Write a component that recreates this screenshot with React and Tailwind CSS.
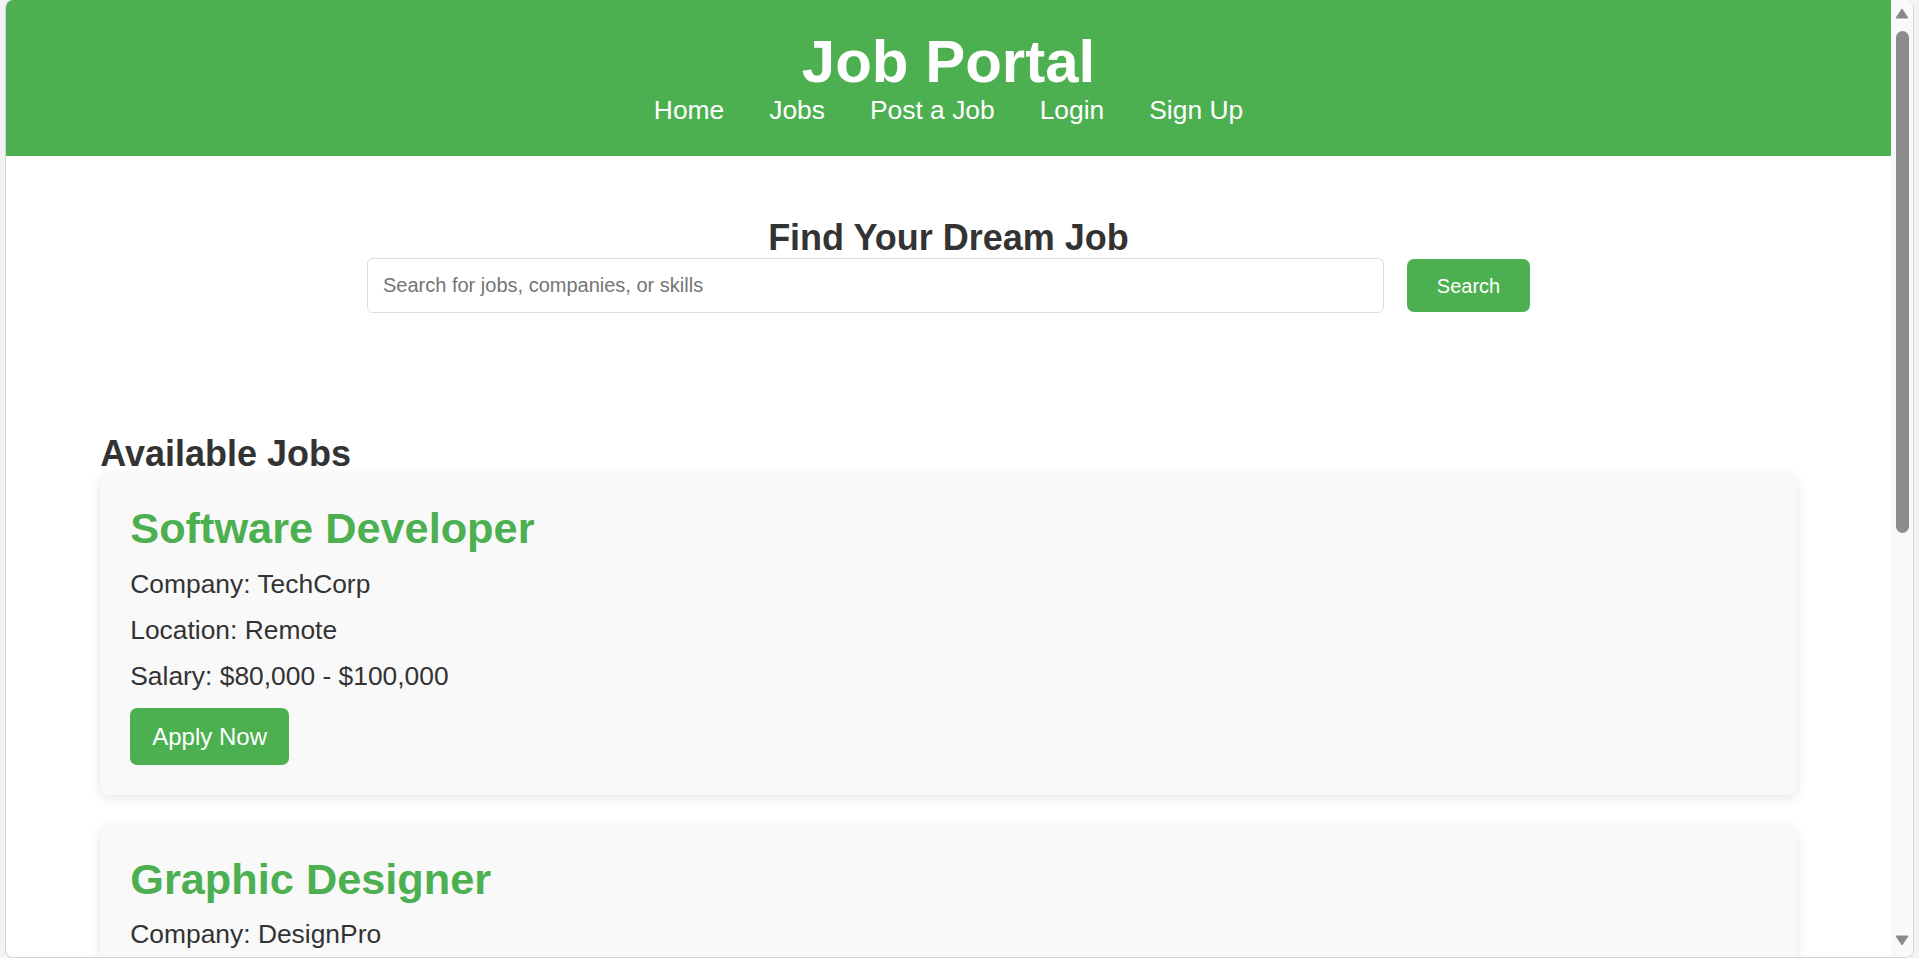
import React from "react";

const jobs = [
  { title: "Software Developer", company: "TechCorp", location: "Remote", salary: "$80,000 - $100,000" },
  { title: "Graphic Designer", company: "DesignPro", location: "New York, NY", salary: "$60,000 - $75,000" },
  { title: "Marketing Manager", company: "BrandWorks", location: "Chicago, IL", salary: "$70,000 - $90,000" },
];

const navLinks = ["Home", "Jobs", "Post a Job", "Login", "Sign Up"];

const Scrollbar = () => (
  <div className="flex flex-col items-center w-[22px] shrink-0 bg-[#f9f9f9]">
    <svg className="mt-[8px]" width="14" height="11" viewBox="0 0 14 11">
      <path d="M7 1 L13 10 L1 10 Z" fill="#8a8a8a" stroke="#8a8a8a" strokeLinejoin="round" />
    </svg>
    <div className="mt-[12px] ml-[1px] w-[13px] h-[502px] rounded-full bg-[#8c8c8c]" />
    <div className="flex-1" />
    <svg className="mb-[11px]" width="14" height="11" viewBox="0 0 14 11">
      <path d="M1 1 L13 1 L7 10 Z" fill="#8a8a8a" stroke="#8a8a8a" strokeLinejoin="round" />
    </svg>
  </div>
);

const JobCard = ({ job }) => (
  <div className="bg-[#f9f9f9] rounded-[8px] shadow-[0_3px_12px_rgba(0,0,0,0.1)] px-[30px] pt-[30px] pb-[30px] mb-[30px]">
    <h3 className="text-[43.3px] leading-[49.5px] font-bold text-[#4caf50]">{job.title}</h3>
    <p className="mt-[15px] text-[26.4px] leading-[31px] text-[#333]">Company: {job.company}</p>
    <p className="mt-[15px] text-[26.4px] leading-[31px] text-[#333]">Location: {job.location}</p>
    <p className="mt-[15px] text-[26.4px] leading-[31px] text-[#333]">Salary: {job.salary}</p>
    <button className="mt-[16px] bg-[#4caf50] text-white text-[24px] leading-[27px] px-[22px] py-[15px] rounded-[7px]">
      Apply Now
    </button>
  </div>
);

export default function App() {
  return (
    <div className="h-[958px] w-full bg-[#f3f3f3] px-[5px] font-['Liberation_Sans',Arial,sans-serif] overflow-hidden">
      <div className="flex h-full rounded-[8px] border border-t-0 border-[#d4d4d4] bg-white overflow-hidden">
        {/* Page */}
        <main className="flex-1 min-w-0 overflow-hidden">
          {/* Header */}
          <header className="bg-[#4caf50] text-white text-center pt-[27px] pb-[31px]">
            <h1 className="text-[60px] leading-[69px] font-bold">Job Portal</h1>
            <nav className="flex justify-center gap-[45px] text-[26.4px] leading-[29px]">
              {navLinks.map((l) => (
                <a key={l} href="#" className="text-white">
                  {l}
                </a>
              ))}
            </nav>
          </header>

          {/* Search */}
          <section className="pt-[61px] text-center">
            <h2 className="text-[36px] leading-[41px] font-bold text-[#333]">Find Your Dream Job</h2>
            <div className="flex justify-center items-center gap-[23px]">
              <input
                type="text"
                placeholder="Search for jobs, companies, or skills"
                className="w-[1017px] h-[55px] border border-[#dddddd] rounded-[6px] px-[15px] text-[20px] placeholder:text-[#757575] outline-none"
              />
              <button className="w-[123px] h-[53px] bg-[#4caf50] text-white text-[20px] rounded-[7px]">
                Search
              </button>
            </div>
          </section>

          {/* Jobs */}
          <section className="w-[90%] mx-auto mt-[120px]">
            <h2 className="text-[36px] leading-[41px] font-bold text-[#333]">Available Jobs</h2>
            {jobs.map((job) => (
              <JobCard key={job.title} job={job} />
            ))}
          </section>
        </main>
        <Scrollbar />
      </div>
    </div>
  );
}
